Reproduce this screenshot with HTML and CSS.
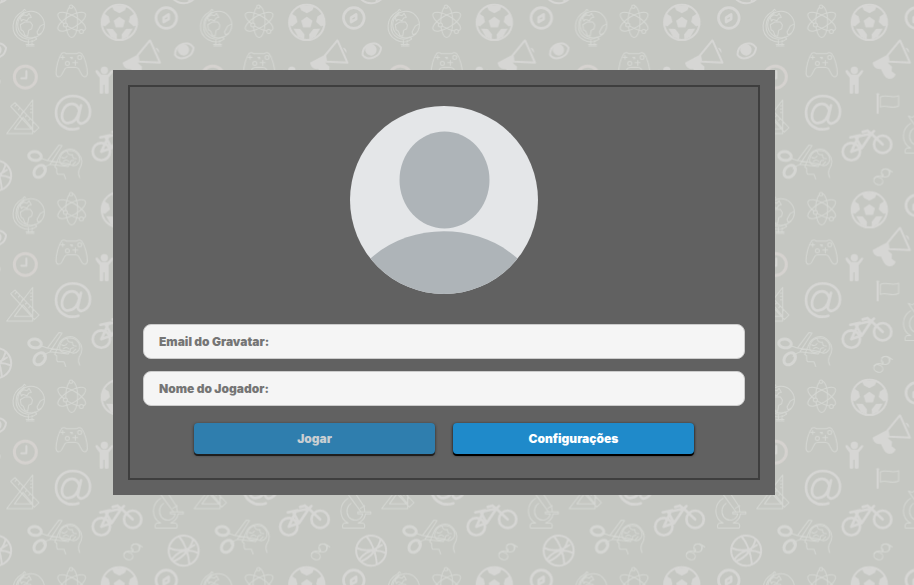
FILE: index.html
```html
<!DOCTYPE html>
<html lang="pt-BR">
<head>
<meta charset="utf-8">
<meta name="viewport" content="width=device-width, initial-scale=1">
<title>Jogar</title>
<link rel="stylesheet" href="styles.css">
</head>
<body>
<svg class="wallpaper" aria-hidden="true">
  <defs>
    <g id="icons">
      <!-- globe -->
      <g class="thin">
        <circle cx="93" cy="74" r="40"/>
        <path d="M77 31l-4-3-5 6C32 53 29 100 62 119c16 9 34 9 48-2l-4-5M73 36C40 57 41 98 68 113c13 6 26 5 36-2M85 121v13M96 121v13M79 138h23M78 133h24"/>
        <path d="M61 52l10-8 10 3 6-7 7 12-8 2-5 8-12-4-5 5zM61 74l13-8h17l6 9-2 11-9 5-3 17-8-1-5-13-7-5zM130 73l-9 5-10 18 3 8 9-3"/>
      </g>
      <!-- atom -->
      <g class="thin">
        <ellipse cx="215" cy="65" rx="18" ry="47"/>
        <ellipse cx="215" cy="65" rx="18" ry="47" transform="rotate(60 215 65)"/>
        <ellipse cx="215" cy="65" rx="18" ry="47" transform="rotate(-60 215 65)"/>
        <circle class="knob" cx="213" cy="20" r="5"/>
        <circle class="knob" cx="196" cy="75" r="6"/>
        <circle class="knob" cx="244" cy="94" r="6"/>
      </g>
      <!-- football -->
      <circle class="mid" cx="358" cy="67" r="53"/>
      <path class="fill" d="M358 50l17 12-6 20h-22l-6-20zM336 18h44l-5 13-17 9-17-9zM405 40l9 34-13 5-15-13 4-17zM311 40l-9 34 13 5 15-13-4-17zM398 86l-14 24-18 8-1-15 13-16zM318 86l14 24 18 8 1-15-13-16z"/>
      <!-- compass -->
      <circle class="bold" cx="499" cy="54" r="31"/>
      <path class="bold" d="M491 53l15-10v14l-15 9z"/>
      <!-- eye -->
      <g transform="rotate(-14 553 152)">
        <path class="mid" d="M523 157c8-31 49-35 59-7-10 29-51 30-59 7z"/>
        <circle class="fill" cx="551" cy="149" r="17"/>
      </g>
      <!-- clock -->
      <circle class="heavy" cx="76" cy="231" r="33"/>
      <path class="mid" d="M79 213v22H64"/>
      <!-- game controller -->
      <g class="thin">
        <path d="M185 160q7-5 14 1h31q8-6 15 0c10 13 17 41 17 60-2 12-12 12-17 3l-9-17q-4-5-10-5h-22q-6 0-10 5l-9 17c-5 9-15 9-17-3 0-19 7-48 17-61z"/>
        <circle cx="239" cy="172" r="6"/><circle cx="202" cy="190" r="6"/>
        <path d="M188 166v11M182 172h12M226 181v15M218 188h15M211 172h6M213 176h5"/>
      </g>
      <!-- person -->
      <circle class="fill" cx="313" cy="211" r="11"/>
      <path class="fill" d="M287 211l5-1 12 14h19l12-14 5 2c2 3-11 17-14 21v46q-6 5-12 0v-25h-4v25q-7 5-11 0v-46c-3-4-16-18-12-22z"/>
      <!-- megaphone -->
      <path class="mid" d="M413 166l37-45 30 67-64-3z"/>
      <path class="fill" d="M368 188l45-24 2 27 11 9-1 14 12 9q-5 15-21 13c-14-4-17-18-23-29-15 3-24-8-25-19zM466 143q13 2 11 16z"/>
      <!-- at sign -->
      <path class="bold" d="M235 385c-38 12-67-15-67-47 0-30 22-50 50-50 33 0 52 21 52 47 0 32-34 47-37 25l10-44M238 333c-7-31-38-25-48-3-10 23-1 39 14 39 19 0 29-15 34-36z"/>
      <!-- set square and ruler -->
      <g class="thin">
        <path d="M20 401l78-101v101zM43 387l26-35 29 34zM32 319l13-11 72 75-14 13zM45 319l5-5M55 329l5-5M65 340l5-5M76 350l5-5M86 361l5-5M97 372l5-5M91 317h7M91 327h7M91 337h7"/>
      </g>
      <!-- flag -->
      <path class="mid" d="M383 283v56"/>
      <path class="thin" d="M391 291c18-11 32 7 55-4v31c-22 11-37-6-55 3zM380 282h7"/>
      <!-- bicycle -->
      <g class="bold">
        <circle cx="304" cy="455" r="26"/><circle cx="398" cy="433" r="26"/>
        <path d="M304 455l21-46 39-8-29 43-31 11M335 444l-17-31M301 412l28-6M364 401l34 32M353 392l-15 4M352 392l12 9 8-8"/>
      </g>
      <!-- scissors -->
      <ellipse class="heavy pale" cx="105" cy="468" rx="19" ry="13" transform="rotate(8 105 468)"/>
      <ellipse class="heavy pale" cx="119" cy="514" rx="20" ry="15" transform="rotate(-50 119 514)"/>
      <path class="thin" d="M123 475l19 7 35-47 9 2-37 57-15 6-5 7M145 482l64 10-5 8-54-7"/>
      <!-- head with brain -->
      <g class="thin">
        <path d="M174 476c10-31 43-37 61-16 17 20 10 37 2 49-3 8-1 17 2 24M174 476l-10 25 6 4v10q0 9 8 8h14l5 14"/>
        <path d="M180 488c-5-17 7-34 24-36 26-4 41 20 32 36-9 13-21 10-29 4-10 4-21 4-27-4zM185 472q10 6 16-4M202 455q1 11 15 9M218 466q-2 11 11 10M190 484q9-8 16 0M210 491q0-11 11-10M218 495l9-10"/>
      </g>
      <!-- glasses -->
      <g class="thin">
        <ellipse cx="385" cy="543" rx="14" ry="11" transform="rotate(25 385 543)"/>
        <circle cx="406" cy="519" r="12"/>
        <path d="M372 535q10-11 26-4 3-7-1-11M395 511q10-9 23-1l9 6M414 529q7-5 5-17"/>
      </g>
      <!-- microscope -->
      <g class="thin">
        <path d="M475 348l12 4 10-7 33 50 2 16-12-1-36-49zM482 370c-29 18-29 59 0 74h-11q-8 5-5 15h64q5-10-4-15h-14c12-5 20-14 22-27h16v-6h-39v6h15c-5 20-29 25-42 9-11-16-4-34 7-41M519 400l13-8"/>
      </g>
      <!-- basketball -->
      <g class="mid">
        <circle cx="551" cy="527" r="45"/>
        <path d="M537 484c19 22 28 50 31 83M580 493c-8 28-30 54-57 65M508 519c27 12 49 10 75-9M515 554c21-28 50-33 80-20"/>
      </g>
      <!-- edge marker -->
      <ellipse class="fill" cx="556" cy="245" rx="8" ry="10"/>
    </g>
    <pattern id="tile" width="562.5" height="562.5" patternUnits="userSpaceOnUse" patternTransform="scale(.33333)">
      <use href="#icons"/>
      <use href="#icons" x="-562.5"/>
      <use href="#icons" y="-562.5"/>
      <use href="#icons" x="-562.5" y="-562.5"/>
    </pattern>
  </defs>
  <rect class="sheet" width="100%" height="100%" fill="url(#tile)"/>
</svg>

<main class="card">
  <form class="login">
    <svg class="avatar" viewBox="0 0 188 188" aria-hidden="true">
      <defs><clipPath id="round"><circle cx="94" cy="94" r="94"/></clipPath></defs>
      <g clip-path="url(#round)">
        <rect width="188" height="188" fill="#e4e6e8"/>
        <ellipse cx="94.500" cy="74" rx="45" ry="48.500" fill="#aeb4b8"/>
        <path d="M21 152C62 116 127 117 167 152v36H21z" fill="#aeb4b8"/>
      </g>
    </svg>
    <div class="fields">
      <input class="field" type="email" placeholder="Email do Gravatar:" aria-label="Email do Gravatar:">
      <input class="field" type="text" placeholder="Nome do Jogador:" aria-label="Nome do Jogador:">
    </div>
    <div class="actions">
      <button class="button" type="submit" disabled>Jogar</button>
      <button class="button" type="button">Configurações</button>
    </div>
  </form>
</main>
</body>
</html>
```

FILE: styles.css
```css
* {
  box-sizing: border-box;
}

body {
  margin: 0;
  background: #c5c7c2;
  font-family: "Arial Black", Inter, sans-serif;
  font-size: 12px;
  font-weight: 900;
}

/* Repeating icon wallpaper behind the card */
.wallpaper {
  position: fixed;
  inset: 0;
  z-index: -1;
  width: 100%;
  height: 100%;
  fill: none;
  stroke: #d6d6d4;
  stroke-linecap: round;
  stroke-linejoin: round;
}

.sheet {
  stroke: none;
}

.thin {
  stroke: #d5d7d3;
  stroke-width: 3;
}

.mid {
  stroke-width: 6;
}

.bold {
  stroke-width: 8;
}

.heavy {
  stroke: #d5d2cf;
  stroke-width: 9;
}

.pale {
  stroke: #d5d6d3;
}

.fill {
  fill: #d6d6d4;
  stroke: none;
}

.knob {
  fill: #c5c7c2;
}

.card {
  margin: 70px 139px 90px 113px;
  padding: 15px;
  background: #616161;
}

.login {
  display: flex;
  flex-direction: column;
  align-items: center;
  padding: 19px 13px 24px;
  border: 2px solid #3e3e3e;
}

.avatar {
  width: 188px;
  height: 188px;
}

.fields {
  display: flex;
  flex-direction: column;
  gap: 12px;
  width: 100%;
  margin-top: 30px;
}

.field {
  width: 100%;
  height: 35px;
  padding: 0 15px;
  border: 1px solid #ccc;
  border-radius: 8px;
  background: #f5f5f5;
  color: #555;
  font: inherit;
}

.field::placeholder {
  color: #757575;
  opacity: 1;
}

.actions {
  display: flex;
  justify-content: center;
  gap: 18px;
  width: 100%;
  margin-top: 17px;
}

.button {
  width: 40%;
  height: 31px;
  padding: 0;
  border: 0;
  border-radius: 4px;
  background: #1f8aca;
  box-shadow: 0 1px 3px #000, 0 2px 0 #000;
  color: #fff;
  font: inherit;
}

.button:disabled {
  background: #2f7eae;
  box-shadow: 0 1px 3px #222, 0 2px 0 #1c1c1c;
  color: #c9ced2;
}
```
